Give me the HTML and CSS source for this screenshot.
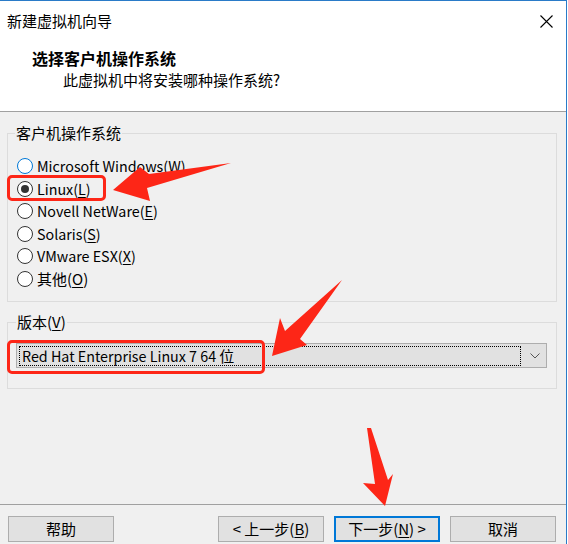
FILE: index.html
```html
<!DOCTYPE html>
<html lang="zh-CN">
<head>
<meta charset="utf-8">
<title>新建虚拟机向导</title>
<link rel="stylesheet" href="styles.css">
</head>
<body>
<div class="win">
  <div class="titlebar">
    <span class="title">新建虚拟机向导</span>
    <svg class="close" width="13" height="13" viewBox="0 0 13 13"><path d="M0.5 0.5 L12.5 12.5 M12.5 0.5 L0.5 12.5" stroke="#000" stroke-width="1.1" fill="none"/></svg>
  </div>
  <div class="header">
    <div class="h-title">选择客户机操作系统</div>
    <div class="h-sub">此虚拟机中将安装哪种操作系统?</div>
  </div>
  <div class="body">
    <fieldset class="group g1">
      <legend>客户机操作系统</legend>
      <div class="radio"><span class="dot hover"></span><span class="lbl">Microsoft Windows(<u>W</u>)</span></div>
      <div class="radio"><span class="dot checked"></span><span class="lbl">Linux(<u>L</u>)</span></div>
      <div class="radio"><span class="dot"></span><span class="lbl">Novell NetWare(<u>E</u>)</span></div>
      <div class="radio"><span class="dot"></span><span class="lbl">Solaris(<u>S</u>)</span></div>
      <div class="radio"><span class="dot"></span><span class="lbl">VMware ESX(<u>X</u>)</span></div>
      <div class="radio"><span class="dot"></span><span class="lbl cjk">其他(<u>O</u>)</span></div>
    </fieldset>
    <fieldset class="group g2">
      <legend>版本(<u>V</u>)</legend>
      <div class="combo">
        <div class="focus"><span class="lat">Red Hat Enterprise Linux 7 64 </span>位</div>
        <svg class="chev" width="10" height="6" viewBox="0 0 10 6"><path d="M0.5 0.5 L5 5 L9.5 0.5" stroke="#555" stroke-width="1" fill="none"/></svg>
      </div>
    </fieldset>
  </div>
  <div class="footer">
    <div class="btn">帮助</div>
    <div class="btn push">&lt; 上一步(<u>B</u>)</div>
    <div class="btn def">下一步(<u>N</u>) &gt;</div>
    <div class="btn">取消</div>
  </div>
</div>
<svg class="marks" width="568" height="544" viewBox="0 0 568 544">
  <rect x="8.5" y="176.5" width="96" height="23" rx="3.5" fill="none" stroke="#fd2617" stroke-width="3"/>
  <rect x="8.5" y="341.5" width="255" height="31" rx="3.5" fill="none" stroke="#fd2617" stroke-width="3"/>
  <polygon fill="#fd2617" points="113,190 140,167 149,174 231,163 147,188 150,201"/>
  <polygon fill="#fd2617" points="272,356 280,318 285,331 342,280 300,339 307,345"/>
  <polygon fill="#fd2617" points="367,428 371,428 388,480 393,474 385,506 363,483 375,484"/>
</svg>
</body>
</html>
```
FILE: styles.css
```css
* { box-sizing: border-box; }
html, body { margin: 0; padding: 0; }
body {
  width: 568px;
  height: 544px;
  overflow: hidden;
  position: relative;
  background: #ffffff;
  font-family: "Noto Sans CJK SC", "Noto Sans", sans-serif;
  font-size: 15px;
  color: #000;
}
u { text-decoration: underline; text-underline-offset: 2px; }
.win {
  width: 567px;
  height: 544px;
  border-top: 1px solid #2a7bc8;
  border-right: 1px solid #2a7bc8;
  background: #f0f0f0;
  display: flex;
  flex-direction: column;
}
.titlebar {
  height: 40px;
  background: #fff;
  display: flex;
  align-items: center;
  justify-content: space-between;
  padding: 0 13px 0 7px;
}
.title { font-size: 15px; line-height: 20px; }
.close { display: block; }
.header {
  height: 71px;
  background: #fff;
  border-bottom: 1px solid #a0a0a0;
  padding-top: 7px;
}
.h-title {
  padding-left: 32px;
  font-size: 16px;
  font-weight: 700;
  line-height: 20px;
}
.h-sub {
  padding-left: 63px;
  margin-top: 2px;
  line-height: 20px;
}
.body {
  height: 392px;
  padding-top: 11px;
}
.group {
  margin: 0 0 0 7px;
  width: 550px;
  border: 1px solid #dcdcdc;
  min-width: 0;
}
.group legend {
  padding: 0 1px;
  line-height: 20px;
  margin-left: 0;
}
.g1 { padding: 12px 0 11px 7px; }
.g2 { padding: 11px 9px 20px 8px; margin-top: 10px; }
.radio {
  display: flex;
  align-items: center;
  height: 22.5px;
  line-height: 20px;
  padding-left: 2px;
  gap: 4px;
}
.lbl { font-size: 14.3px; }
.lbl.cjk { font-size: 15px; }
.dot {
  width: 16px;
  height: 16px;
  border: 1px solid #333;
  border-radius: 50%;
  background: #fff;
  display: flex;
  align-items: center;
  justify-content: center;
  flex: none;
}
.dot.hover { border-color: #0078d7; }
.dot.checked::after {
  content: "";
  width: 8px;
  height: 8px;
  border-radius: 50%;
  background: #333;
}
.combo {
  height: 25px;
  background: #e1e1e1;
  border: 1px solid #adadad;
  display: flex;
  align-items: center;
  padding: 0 0 0 2px;
}
.focus {
  flex: 1;
  height: 20px;
  border: 1px dotted #000;
  line-height: 18px;
  padding-left: 2px;
  margin-top: 1px;
}
.lat { font-size: 14.3px; }
.chev { display: block; margin: 0 6px 0 9px; }
.footer {
  border-top: 1px solid #a0a0a0;
  padding: 11px 10px 0 8px;
  display: flex;
  gap: 10px;
  width: 566px;
}
.btn {
  width: 106px;
  height: 26px;
  background: #e1e1e1;
  border: 1px solid #adadad;
  display: flex;
  align-items: center;
  justify-content: center;
  line-height: 20px;
  flex: none;
}
.btn.push { margin-left: auto; }
.btn.def { border: 2px solid #0078d7; }
.marks { position: absolute; left: 0; top: 0; pointer-events: none; }
```
